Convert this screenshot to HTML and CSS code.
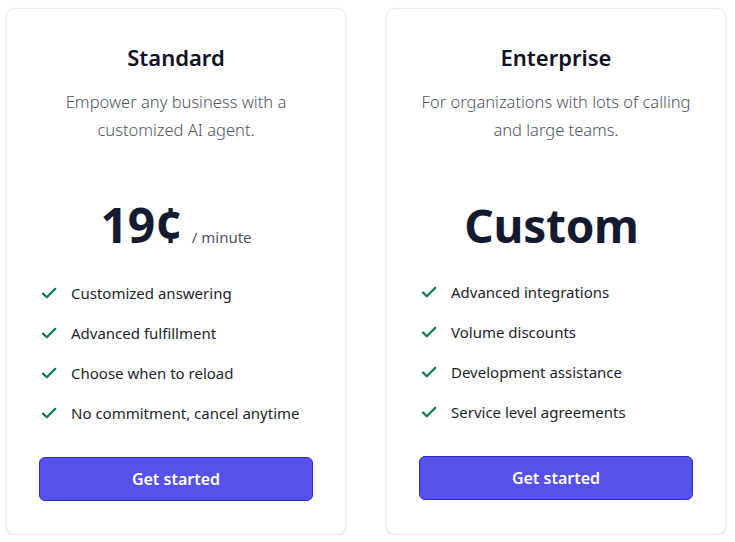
FILE: index.html
```html
<!DOCTYPE html>
<html lang="en">
<head>
<meta charset="utf-8">
<title>Pricing</title>
<link rel="stylesheet" href="styles.css">
</head>
<body>
<main class="plans">
  <section class="card">
    <h2 class="card-title">Standard</h2>
    <p class="card-desc">Empower any business with a customized AI agent.</p>
    <div class="price">
      <span class="price-amount">19¢</span>
      <span class="price-unit">/ minute</span>
    </div>
    <ul class="features">
      <li class="feature"><svg class="check" viewBox="0 0 20 20" aria-hidden="true"><path d="M4 10.5l3.8 3.8L16.3 5.8"/></svg><span>Customized answering</span></li>
      <li class="feature"><svg class="check" viewBox="0 0 20 20" aria-hidden="true"><path d="M4 10.5l3.8 3.8L16.3 5.8"/></svg><span>Advanced fulfillment</span></li>
      <li class="feature"><svg class="check" viewBox="0 0 20 20" aria-hidden="true"><path d="M4 10.5l3.8 3.8L16.3 5.8"/></svg><span>Choose when to reload</span></li>
      <li class="feature"><svg class="check" viewBox="0 0 20 20" aria-hidden="true"><path d="M4 10.5l3.8 3.8L16.3 5.8"/></svg><span>No commitment, cancel anytime</span></li>
    </ul>
    <button class="cta" type="button">Get started</button>
  </section>
  <section class="card card-enterprise">
    <h2 class="card-title">Enterprise</h2>
    <p class="card-desc">For organizations with lots of calling and large teams.</p>
    <div class="price price-custom">
      <span class="price-amount">Custom</span>
    </div>
    <ul class="features">
      <li class="feature"><svg class="check" viewBox="0 0 20 20" aria-hidden="true"><path d="M4 10.5l3.8 3.8L16.3 5.8"/></svg><span>Advanced integrations</span></li>
      <li class="feature"><svg class="check" viewBox="0 0 20 20" aria-hidden="true"><path d="M4 10.5l3.8 3.8L16.3 5.8"/></svg><span>Volume discounts</span></li>
      <li class="feature"><svg class="check" viewBox="0 0 20 20" aria-hidden="true"><path d="M4 10.5l3.8 3.8L16.3 5.8"/></svg><span>Development assistance</span></li>
      <li class="feature"><svg class="check" viewBox="0 0 20 20" aria-hidden="true"><path d="M4 10.5l3.8 3.8L16.3 5.8"/></svg><span>Service level agreements</span></li>
    </ul>
    <button class="cta" type="button">Get started</button>
  </section>
</main>
</body>
</html>
```

FILE: styles.css
```css
* {
  box-sizing: border-box;
}

html, body {
  margin: 0;
  padding: 0;
  background: #ffffff;
}

body {
  font-family: "Noto Sans", "Open Sans", sans-serif;
  color: #111827;
}

.plans {
  display: flex;
  align-items: stretch;
  gap: 40px;
  padding: 8px 0 0 6px;
}

.card {
  width: 340px;
  height: 527px;
  background: #ffffff;
  border: 1px solid #ececee;
  border-radius: 9px;
  box-shadow: 0 1px 3px rgba(0, 0, 0, 0.09), 0 1px 2px rgba(0, 0, 0, 0.05);
  padding: 32px;
  display: flex;
  flex-direction: column;
}

.card-title {
  margin: 0;
  text-align: center;
  font-size: 22px;
  line-height: 32px;
  font-weight: 600;
  color: #0f1126;
}

.card-desc {
  margin: 15px -6px 0;
  text-align: center;
  font-size: 16.5px;
  line-height: 28px;
  font-weight: 300;
  color: #4b5563;
}

.price {
  margin-top: 57px;
  display: flex;
  justify-content: center;
  align-items: baseline;
  gap: 9px;
  height: 48px;
  line-height: 48px;
}

.price-amount {
  font-size: 48px;
  font-weight: 700;
  color: #141a30;
}

.price-custom {
  padding-right: 9px;
}

.price-custom .price-amount {
  font-size: 46px;
  letter-spacing: -0.3px;
}

.price-unit {
  font-size: 15px;
  color: #4b5563;
}

.features {
  list-style: none;
  margin: 32px 0 0;
  padding: 0;
  display: flex;
  flex-direction: column;
  gap: 16px;
}

.card-enterprise .features {
  margin-top: 31px;
}

.feature {
  display: flex;
  align-items: center;
  gap: 12px;
  font-size: 15px;
  line-height: 24px;
  color: #1b1f2b;
}

.check {
  width: 20px;
  height: 20px;
  flex: none;
  fill: none;
  stroke: #047857;
  stroke-width: 2.2;
  stroke-linecap: round;
  stroke-linejoin: round;
}

.cta {
  margin-top: 32px;
  width: 100%;
  height: 44px;
  border: 1px solid #2f2cc2;
  border-radius: 6px;
  background: #5651ec;
  color: #ffffff;
  font-family: inherit;
  font-size: 16px;
  font-weight: 600;
  cursor: pointer;
}
```
